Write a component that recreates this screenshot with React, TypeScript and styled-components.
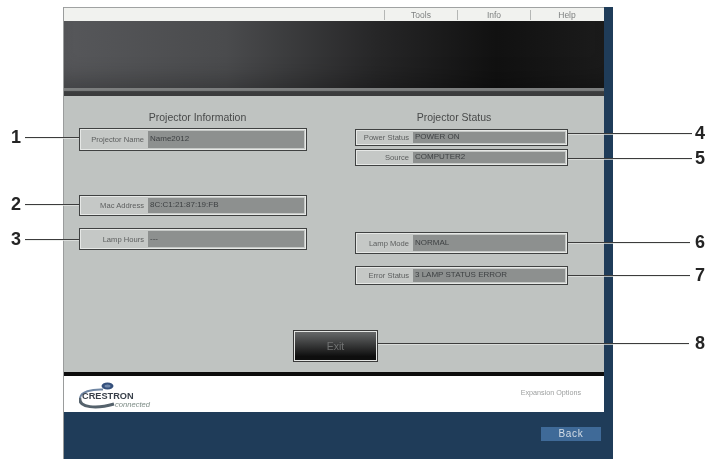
import React from 'react';
import styled, { createGlobalStyle } from 'styled-components';

const GlobalStyle = createGlobalStyle`
  html, body {
    margin: 0;
    padding: 0;
    background: #fff;
  }
  body {
    font-family: "Liberation Sans", Arial, sans-serif;
  }
`;

const Page = styled.div`
  position: relative;
  width: 712px;
  height: 459px;
  overflow: hidden;
  background: #fff;
  padding: 7px 0 0 63px;
  box-sizing: border-box;
  filter: blur(0.6px);
`;

const Win = styled.div`
  display: flex;
  width: 550px;
  height: 452px;
`;

const Main = styled.div`
  display: flex;
  flex-direction: column;
  width: 541px;
  border-left: 1px solid #9a9c9c;
  box-sizing: border-box;
`;

const Strip = styled.div`
  width: 9px;
  background: #1f3c59;
`;

const TopBar = styled.div`
  display: flex;
  justify-content: flex-end;
  align-items: center;
  height: 14px;
  padding-right: 1px;
  box-sizing: border-box;
  border-top: 1px solid #a0a2a2;
  background: #f1f2ef;
`;

const MenuItem = styled.div`
  width: 72px;
  height: 10px;
  line-height: 10px;
  text-align: center;
  font-size: 8.5px;
  color: #7e8080;
  border-left: 1px solid #b5b7b5;
`;

const Banner = styled.div`
  height: 67px;
  background: linear-gradient(90deg, #56575a 0%, #4a4b4d 30%, #262627 58%, #111 80%, #1b1b1b 100%);
  box-shadow: inset 0 -22px 22px -14px rgba(0, 0, 0, 0.25);
`;

const Stripe = styled.div`
  height: 8px;
  background: linear-gradient(#7c7e7e 0, #7c7e7e 30%, #3c3e3f 45%, #3a3b3c 100%);
`;

const Panel = styled.div`
  display: grid;
  grid-template-columns: 276px 213px;
  height: 276px;
  padding: 17px 0 0 15px;
  box-sizing: border-box;
  background: #bfc3c1;
`;

const Column = styled.div`
  display: flex;
  flex-direction: column;
`;

const Title = styled.div<{ $width: number }>`
  height: 15px;
  line-height: 9px;
  font-size: 10.5px;
  color: #484a4a;
  text-align: center;
  width: ${p => p.$width}px;
`;

const Field = styled.div<{ $top: number; $height: number; $wide?: boolean }>`
  display: flex;
  align-items: stretch;
  width: ${p => (p.$wide ? 228 : 213)}px;
  height: ${p => p.$height}px;
  margin-top: ${p => p.$top}px;
  box-sizing: border-box;
  border: 1px solid #3f4141;
  box-shadow: inset 0 0 0 1px #e6e8e6;
  background: #c5c8c6;
`;

const Label = styled.div<{ $wide?: boolean }>`
  flex: 0 0 ${p => (p.$wide ? 68 : 57)}px;
  padding: 0 4px 0 0;
  box-sizing: border-box;
  display: flex;
  justify-content: flex-end;
  align-items: center;
  font-size: 7.6px;
  color: #5c5e5e;
  white-space: nowrap;
`;

const Value = styled.div`
  flex: 1;
  display: flex;
  align-items: center;
  margin: 2px 2px 2px 0;
  padding: 0 2px 2px;
  font-size: 8px;
  color: #3e4143;
  background: #8d908f;
  white-space: nowrap;
  overflow: hidden;
`;

const ExitButton = styled.div`
  position: absolute;
  left: 293px;
  top: 330px;
  width: 85px;
  height: 32px;
  box-sizing: border-box;
  border: 1px solid #3a3a3a;
  outline: 1px solid #e4e6e4;
  outline-offset: -2px;
  display: flex;
  align-items: center;
  justify-content: center;
  font-size: 10.5px;
  color: #707272;
  background: linear-gradient(#6a6c6d, #0e0e0e 85%);
`;

const BlackRule = styled.div`
  height: 4px;
  background: #0c0c0c;
`;

const Footer = styled.div`
  display: flex;
  justify-content: space-between;
  align-items: center;
  height: 36px;
  padding: 0 23px 0 15px;
  box-sizing: border-box;
  background: #fff;
`;

const FooterText = styled.div`
  font-size: 7.2px;
  color: #9c9e9e;
  margin-bottom: 3px;
`;

const BottomBar = styled.div`
  flex: 1;
  display: flex;
  justify-content: flex-end;
  align-items: flex-start;
  padding: 15px 3px 0 0;
  box-sizing: border-box;
  background: #1f3c59;
`;

const BackButton = styled.div`
  width: 60px;
  height: 14px;
  line-height: 14px;
  text-align: center;
  font-size: 10px;
  letter-spacing: 0.7px;
  color: #d4dde6;
  background: #3f6a98;
`;

const Number = styled.div<{ $x: number; $y: number }>`
  position: absolute;
  left: ${p => p.$x}px;
  top: ${p => p.$y}px;
  width: 14px;
  height: 18px;
  line-height: 18px;
  text-align: center;
  font-size: 18px;
  font-weight: 700;
  color: #242424;
`;

const Leader = styled.div<{ $x: number; $y: number; $w: number }>`
  position: absolute;
  left: ${p => p.$x}px;
  top: ${p => p.$y}px;
  width: ${p => p.$w}px;
  height: 1px;
  background: #3c3c3c;
  box-shadow: 0 1px 0 rgba(230, 232, 230, 0.7);
`;

const callouts = [
  { n: '1', numX: 9, y: 137, lineX: 25, w: 54 },
  { n: '2', numX: 9, y: 204, lineX: 25, w: 54 },
  { n: '3', numX: 9, y: 239, lineX: 25, w: 54 },
  { n: '4', numX: 693, y: 133, lineX: 568, w: 124 },
  { n: '5', numX: 693, y: 158, lineX: 568, w: 124 },
  { n: '6', numX: 693, y: 242, lineX: 568, w: 122 },
  { n: '7', numX: 693, y: 275, lineX: 568, w: 122 },
  { n: '8', numX: 693, y: 343, lineX: 378, w: 311 },
];

function CrestronLogo() {
  return (
    <svg width="74" height="30" viewBox="0 0 74 30">
      <ellipse cx="28.5" cy="7" rx="6" ry="3.5" fill="#35507c" />
      <ellipse cx="28.5" cy="7" rx="3" ry="1.6" fill="#7088ab" />
      <path d="M1 19 C2 13 12 10 24 10.5" fill="none" stroke="#6f86a3" strokeWidth="2" />
      <path d="M1 19 C-1 29 18 30 35 25" fill="none" stroke="#55626c" strokeWidth="3" />
      <text x="3" y="20" fontSize="9.2" fontWeight="700" fontFamily="Liberation Sans" fill="#39404a">CRESTRON</text>
      <text x="36" y="27.5" fontSize="7.6" fontStyle="italic" fontFamily="Liberation Sans" fill="#7d8c86">connected</text>
    </svg>
  );
}

export default function App() {
  return (
    <>
      <GlobalStyle />
      <Page>
        <Win>
          <Main>
            <TopBar>
              <MenuItem>Tools</MenuItem>
              <MenuItem>Info</MenuItem>
              <MenuItem>Help</MenuItem>
            </TopBar>
            <Banner />
            <Stripe />
            <Panel>
              <Column>
                <Title $width={237}>Projector Information</Title>
                <Field $wide $top={0} $height={23}>
                  <Label $wide>Projector Name</Label>
                  <Value>Name2012</Value>
                </Field>
                <Field $wide $top={44} $height={21}>
                  <Label $wide>Mac Address</Label>
                  <Value>8C:C1:21:87:19:FB</Value>
                </Field>
                <Field $wide $top={12} $height={22}>
                  <Label $wide>Lamp Hours</Label>
                  <Value>---</Value>
                </Field>
              </Column>
              <Column>
                <Title $width={198}>Projector Status</Title>
                <Field $top={1} $height={17}>
                  <Label>Power Status</Label>
                  <Value>POWER ON</Value>
                </Field>
                <Field $top={3} $height={17}>
                  <Label>Source</Label>
                  <Value>COMPUTER2</Value>
                </Field>
                <Field $top={66} $height={22}>
                  <Label>Lamp Mode</Label>
                  <Value>NORMAL</Value>
                </Field>
                <Field $top={12} $height={19}>
                  <Label>Error Status</Label>
                  <Value>3 LAMP STATUS ERROR</Value>
                </Field>
              </Column>
            </Panel>
            <BlackRule />
            <Footer>
              <CrestronLogo />
              <FooterText>Expansion Options</FooterText>
            </Footer>
            <BottomBar>
              <BackButton>Back</BackButton>
            </BottomBar>
          </Main>
          <Strip />
        </Win>
        <ExitButton>Exit</ExitButton>
        {callouts.map(c => (
          <React.Fragment key={c.n}>
            <Leader $x={c.lineX} $y={c.y} $w={c.w} />
            <Number $x={c.numX} $y={c.y - 9}>{c.n}</Number>
          </React.Fragment>
        ))}
      </Page>
    </>
  );
}
